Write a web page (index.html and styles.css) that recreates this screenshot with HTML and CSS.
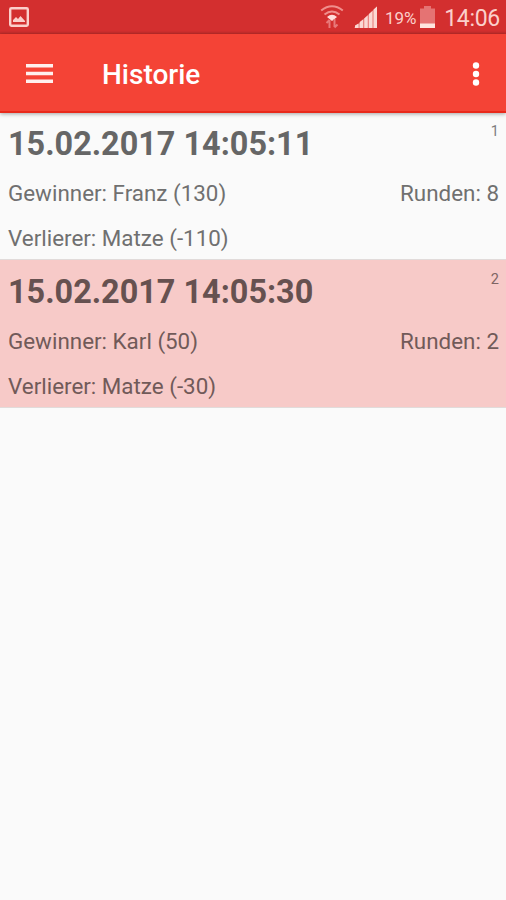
FILE: index.html
```html
<!DOCTYPE html>
<html lang="de">
<head>
<meta charset="utf-8">
<title>Historie</title>
<link rel="stylesheet" href="styles.css">
</head>
<body>
<div class="statusbar">
  <svg class="picture" width="20" height="20" viewBox="0 0 20 20"><rect x="1.2" y="1.2" width="17.6" height="17.6" rx="1.2" fill="none" stroke="#fbcfcb" stroke-width="2.4"/><path d="M4 15v-2l3-3 2 2 2.500-3 4.500 5v1z" fill="#fbcfcb"/></svg>
  <svg class="wifi" width="24" height="26" viewBox="0 0 24 26"><g fill="none" stroke="#f08f8c" stroke-width="2"><path d="M1.200 6.500Q12-2 22.800 6.500"/><path d="M4.500 10.500Q12 4.500 19.500 10.500"/></g><path d="M7 13Q12 8.500 17 13L12 17z" fill="#ffdedb"/><g fill="none" stroke="#e8797a" stroke-width="2"><path d="M9.500 24V16M6.500 19l3-3M14.500 15v8M17.500 20.500l-3 3"/></g></svg>
  <svg class="signal" width="24" height="22" viewBox="0 0 24 22"><path d="M0 22L23 .5V22z" fill="#ea8783"/><g fill="#fbd8d4"><path d="M1 22v-2.500l3.500-2V22zM5.700 22v-6l3.300-2.500V22zM10.300 22V12.500l3.400-3V22zM15 22V8l3.400-3v17zM19.600 22V3.500L23 .5V22z"/></g></svg>
  <span class="percent">19%</span>
  <svg class="battery" width="15" height="22" viewBox="0 0 15 22"><path d="M4 0h7v2.500h4V18H0V2.500h4z" fill="#e57373"/><path d="M0 17.500h15V22H0z" fill="#ffe5df"/></svg>
  <span class="clock">14:06</span>
</div>
<header class="toolbar">
  <svg class="menu" width="27" height="22" viewBox="0 0 27 22"><path d="M0 1h27v3.500H0zM0 8.700h27v3.500H0zM0 16.400h27v3.500H0z" fill="#fff0ee"/></svg>
  <h1>Historie</h1>
  <svg class="more" width="8" height="24" viewBox="0 0 8 24"><g fill="#fff"><circle cx="4" cy="3.500" r="3.200"/><circle cx="4" cy="12" r="3.200"/><circle cx="4" cy="20.500" r="3.200"/></g></svg>
</header>
<main>
  <section class="game">
    <div class="head"><h2>15.02.2017 14:05:11</h2><span class="number">1</span></div>
    <div class="line"><span>Gewinner: Franz (130)</span><span>Runden: 8</span></div>
    <div class="line"><span>Verlierer: Matze (-110)</span></div>
  </section>
  <section class="game alternate">
    <div class="head"><h2>15.02.2017 14:05:30</h2><span class="number">2</span></div>
    <div class="line"><span>Gewinner: Karl (50)</span><span>Runden: 2</span></div>
    <div class="line"><span>Verlierer: Matze (-30)</span></div>
  </section>
</main>
</body>
</html>
```
FILE: styles.css
```css
* { box-sizing: border-box; }
body {
  margin: 0;
  min-height: 900px;
  background: #fafafa;
  color: #707070;
  font-family: Roboto, "Liberation Sans", sans-serif;
  white-space: nowrap;
}
.statusbar {
  display: flex;
  height: 34px;
  padding: 0 6px 0 9px;
  background: linear-gradient(#d32f2f 31px, #bd2b29);
  color: #fbcfcb;
}
.picture { margin-top: 7px; }
.wifi { margin: 4px 0 0 291px; }
.signal { margin: 6px 0 0 10px; }
.percent { margin-left: 7px; width: 35px; font-size: 17px; line-height: 36px; letter-spacing: -0.1px; }
.battery { margin-top: 6px; }
.clock { margin-left: auto; font-size: 23px; line-height: 37px; letter-spacing: -0.3px; }
.toolbar {
  display: flex;
  align-items: center;
  position: relative;
  height: 79px;
  padding: 2px 26px 0;
  background: #f44336;
  border-bottom: 2px solid #e9291b;
  box-shadow: 0 1px 4px rgba(0, 0, 0, .35);
  color: #fff;
}
.toolbar h1 { margin: 3px 0 0 49px; font-size: 28px; line-height: 32px; font-weight: 500; letter-spacing: 0; }
.more { margin-left: auto; }
.game { height: 148px; padding: 9px 7px 0 8px; border-bottom: 1px solid #e1dbda; }
.game:first-child { height: 147px; padding-top: 8px; }
.alternate { background: #f7cac8; color: #715a59; }
.head, .line { display: flex; justify-content: space-between; }
.head { height: 50px; }
.head h2 { margin: 0; color: #666; font-size: 32.4px; line-height: 46px; font-weight: 700; }
.alternate h2 { color: #665150; }
.number { font-size: 14.5px; line-height: 22px; opacity: .9; }
.line { height: 44.5px; font-size: 22.4px; line-height: 44px; }
```
